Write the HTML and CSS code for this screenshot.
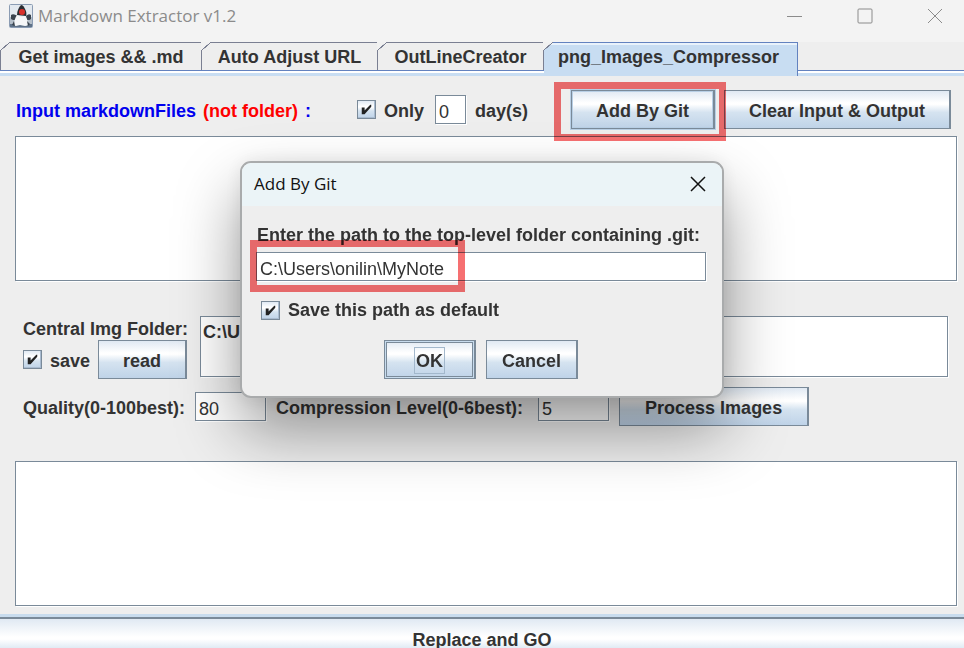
FILE: index.html
```html
<!DOCTYPE html>
<html lang="en">
<head>
<meta charset="utf-8">
<title>Markdown Extractor v1.2</title>
<link rel="stylesheet" href="styles.css">
</head>
<body>
<main class="window">
  <header class="titlebar">
    <svg class="app-icon" viewBox="0 0 24 24" aria-hidden="true">
      <rect x=".5" y=".5" width="23" height="23" rx="1" fill="#e3e9ef" stroke="#8b9cb3"/>
      <path d="M1 13h22v7H1z" fill="#b4bec8"/>
      <path d="M1 20h22v3H1z" fill="#5f7288"/>
      <path d="M2 11c2-2 5 0 7 1l-2 4c-2 0-4 0-5-1zM22 11c-2-2-4 0-5 1l1 4c2 0 3 0 4-1z" fill="#3b444e"/>
      <path d="M12 1c-2 2-4 6-4 10l9 1c1-3 0-5-1-7s-2-4-4-4z" fill="#2a2d31"/>
      <path d="M8 11c-2 3-3 6-3 10 2 2 4 0 6 0s5 2 8 0c0-4-1-7-3-9-2 1-5 1-8-1z" fill="#f6f7f8"/>
      <path d="M5 17l-2 4 3 1zM18 17l3 3-2 2z" fill="#39434d"/>
      <circle cx="13" cy="8" r="3" fill="#d9302a"/>
    </svg>
    <h1 class="title">Markdown Extractor v1.2</h1>
    <div class="window-controls">
      <button type="button" aria-label="Minimize"><svg viewBox="0 0 16 16"><path d="M0 8.5h15"/></svg></button>
      <button type="button" aria-label="Maximize"><svg viewBox="0 0 16 16"><rect x="1" y="1" width="14" height="14" rx="1"/></svg></button>
      <button type="button" aria-label="Close"><svg viewBox="0 0 16 16"><path d="M1 1l14 14M15 1L1 15"/></svg></button>
    </div>
  </header>

  <nav class="tabs" role="tablist">
    <button type="button" class="tab tab-get" role="tab">Get images &amp;&amp; .md</button>
    <button type="button" class="tab tab-adjust" role="tab">Auto Adjust URL</button>
    <button type="button" class="tab tab-outline" role="tab">OutLineCreator</button>
    <button type="button" class="tab tab-active" role="tab" aria-selected="true">png_Images_Compressor</button>
  </nav>

  <section class="panel">
    <div class="input-row">
      <label class="input-label" for="files"><span>Input markdownFiles</span> <span class="warn">(not folder)</span> <span>:</span></label>
      <div class="days">
        <span class="check">
          <input type="checkbox" id="only" checked>
          <svg viewBox="0 0 20 20" aria-hidden="true"><path d="M5 8h3v3l6-6h1v2l-7 8H5z"/></svg>
        </span>
        <label for="only">Only</label>
        <input class="field field-days" id="days" type="text" value="0">
        <label for="days">day(s)</label>
      </div>
      <div class="marked marked-button">
        <button type="button" class="btn btn-focus btn-git">Add By Git</button>
      </div>
      <button type="button" class="btn btn-clear">Clear Input &amp; Output</button>
    </div>

    <textarea class="area" id="files"></textarea>

    <div class="folder-row">
      <div class="folder-side">
        <label for="folder">Central Img Folder:</label>
        <div class="folder-actions">
          <span class="check">
            <input type="checkbox" id="save" checked>
            <svg viewBox="0 0 20 20" aria-hidden="true"><path d="M5 8h3v3l6-6h1v2l-7 8H5z"/></svg>
          </span>
          <label for="save">save</label>
          <button type="button" class="btn btn-read">read</button>
        </div>
      </div>
      <textarea class="area area-folder" id="folder">C:\U</textarea>
    </div>

    <div class="quality-row">
      <label for="quality">Quality(0-100best):</label>
      <input class="field field-number" id="quality" type="text" value="80">
      <label class="level-label" for="level">Compression Level(0-6best):</label>
      <input class="field field-number" id="level" type="text" value="5">
      <button type="button" class="btn btn-process">Process Images</button>
    </div>

    <textarea class="area" aria-label="Output"></textarea>
  </section>

  <button type="button" class="go">Replace and GO</button>

  <div class="dialog" role="dialog" aria-labelledby="dialog-title">
    <header class="dialog-bar">
      <h2 class="dialog-title" id="dialog-title">Add By Git</h2>
      <button type="button" class="dialog-close" aria-label="Close"><svg viewBox="0 0 16 16"><path d="M1 1l14 14M15 1L1 15"/></svg></button>
    </header>
    <div class="dialog-body">
      <label for="path">Enter the path to the top-level folder containing .git:</label>
      <div class="marked marked-path">
        <input class="field field-path" id="path" type="text" value="C:\Users\onilin\MyNote">
      </div>
      <div class="default-row">
        <span class="check">
          <input type="checkbox" id="default" checked>
          <svg viewBox="0 0 20 20" aria-hidden="true"><path d="M5 8h3v3l6-6h1v2l-7 8H5z"/></svg>
        </span>
        <label for="default">Save this path as default</label>
      </div>
      <div class="dialog-actions">
        <button type="button" class="btn btn-default"><span class="focus-text">OK</span></button>
        <button type="button" class="btn btn-cancel">Cancel</button>
      </div>
    </div>
  </div>
</main>
</body>
</html>
```
FILE: styles.css
```css
:root {
  --line: #7a8a99;
  --steel: linear-gradient(#e0e9f3 0%, #ffffff 32%, #ffffff 36%, #d5e3f0 58%, #bfd3e8 100%);
}

*,
*::before,
*::after {
  box-sizing: border-box;
}

body {
  margin: 0;
  background: #eeeeee;
  color: #333333;
  font: bold 18px/22px "Liberation Sans", Arial, sans-serif;
}

button,
input,
textarea {
  margin: 0;
  color: inherit;
  font: inherit;
}

label {
  white-space: nowrap;
}

.window {
  position: relative;
  display: flex;
  flex-direction: column;
  height: 100vh;
  overflow: hidden;
}

/* Title bar */

.titlebar {
  display: flex;
  flex: none;
  align-items: center;
  height: 42px;
  padding: 0 21px 10px 9px;
  background: #f3f3f3;
}

.app-icon {
  width: 24px;
  height: 24px;
}

.title {
  margin: 0 auto 0 5px;
  color: #8b8b8b;
  font: 17px/24px "Open Sans", "Segoe UI", sans-serif;
}

.window-controls {
  display: flex;
  gap: 54px;
}

.window-controls button,
.dialog-close {
  display: flex;
  padding: 0;
  border: 0;
  background: none;
}

.window-controls svg,
.dialog-close svg {
  width: 16px;
  height: 16px;
  fill: none;
  stroke: #8b8b8b;
}

/* Tabs */

.tabs {
  display: flex;
  flex: none;
  height: 34px;
  background: linear-gradient(#6382bf, #6382bf) 0 28px / 100% 1px no-repeat,
    linear-gradient(#ffffff, #ffffff) 0 29px / 100% 2px no-repeat,
    linear-gradient(#c8ddf2, #c8ddf2) 0 31px / 100% 3px no-repeat,
    #eeeeee;
}

.tab {
  position: relative;
  height: 28px;
  padding: 0;
  border: solid #7a7f92;
  border-width: 1px 1px 0 0;
  background: #eeeeee;
  white-space: nowrap;
}

.tab-get {
  width: 202px;
  border-left-width: 1px;
}

.tab-adjust {
  width: 176px;
}

.tab-outline {
  width: 166px;
}

.tab::before {
  position: absolute;
  top: -1px;
  left: -1px;
  width: 10px;
  height: 9px;
  background: linear-gradient(to bottom right, #f1f1f1 46%, #7a7f92 47%, #7a7f92 53%, transparent 54%);
  content: "";
}

.tab-active {
  width: 254px;
  height: 34px;
  padding: 0 4px 5px 0;
  border-color: #6382bf;
  background: #c8ddf2;
  box-shadow: inset 0 2px #e9f2fb;
}

/* Shared controls */

.check {
  display: grid;
  width: 19px;
  height: 19px;
}

.check > * {
  grid-area: 1 / 1;
  width: 19px;
  height: 19px;
  margin: 0;
}

.check input {
  border: 1px solid var(--line);
  background: var(--steel);
  box-shadow: inset -1px -1px #a9bbd0;
  appearance: none;
}

.check svg {
  pointer-events: none;
  fill: #222222;
}

.btn {
  height: 39px;
  padding: 2px 0 0;
  border: 1px solid var(--line);
  border-right-width: 2px;
  border-radius: 0;
  background: var(--steel);
  white-space: nowrap;
}

.field {
  height: 29px;
  padding: 5px 3px 0;
  border: 1px solid var(--line);
  border-radius: 0;
  background: #ffffff;
  box-shadow: 1px 1px #ffffff;
  font-weight: normal;
}

.area {
  display: block;
  width: 100%;
  height: 145px;
  padding: 4px 2px;
  border: 1px solid var(--line);
  border-radius: 0;
  background: #ffffff;
  box-shadow: 1px 1px #ffffff;
  resize: none;
}

/* Annotation frames drawn over the controls they point at */

.marked {
  position: relative;
}

.marked::after {
  position: absolute;
  border: 7px solid #f67071;
  mix-blend-mode: multiply;
  pointer-events: none;
  content: "";
}

.marked-button::after {
  inset: -8px -11px -12px -17px;
  z-index: 1;
}

.marked-path::after {
  top: -12px;
  left: -6px;
  width: 215px;
  height: 52px;
}

/* Compressor panel */

.panel {
  flex: none;
  padding: 14px 7px 7px 15px;
}

.input-row {
  display: flex;
  align-items: center;
  margin-bottom: 7px;
  padding-right: 6px;
}

.input-label {
  display: flex;
  gap: 7px;
  padding: 2px 0 0 1px;
  color: #0000ee;
}

.warn {
  color: #ff0000;
}

.days {
  display: flex;
  align-items: center;
  gap: 8px;
  margin-left: auto;
}

.days label {
  padding-top: 2px;
}

.field-days {
  width: 31px;
  margin: 0 1px 0 3px;
}

.marked-button {
  margin: 0 9px 0 43px;
}

.btn-git {
  width: 144px;
}

.btn-focus {
  display: block;
  box-shadow: 0 0 0 1px #b8cfe5, inset 0 0 0 1px #b8cfe5;
}

.btn-clear {
  width: 227px;
}

.folder-row {
  display: flex;
  gap: 9px;
  margin-top: 35px;
  padding: 0 9px 0 8px;
}

.folder-side {
  display: flex;
  flex: none;
  flex-direction: column;
  width: 168px;
  padding-top: 2px;
}

.folder-actions {
  display: flex;
  align-items: center;
  gap: 8px;
}

.folder-actions label {
  padding-top: 2px;
}

.btn-read {
  width: 89px;
}

.area-folder {
  flex: 1;
  height: 61px;
}

.quality-row {
  display: flex;
  align-items: center;
  gap: 10px;
  margin: 8px 0 35px;
  padding-left: 8px;
}

.quality-row label {
  padding-top: 2px;
}

.field-number {
  width: 71px;
}

.level-label {
  margin-right: 5px;
}

.btn-process {
  width: 190px;
}

.go {
  flex: none;
  width: 100%;
  height: 60px;
  margin-top: 4px;
  padding: 0 0 14px;
  border: solid var(--line);
  border-width: 2px 0;
  background: var(--steel);
  box-shadow: 0 -3px #c8dcee;
}

/* Dialog */

.dialog {
  position: absolute;
  top: 161px;
  left: 50%;
  width: 484px;
  max-width: 100%;
  transform: translateX(-50%);
  overflow: hidden;
  border: 2px solid #a9abac;
  border-radius: 11px;
  background: #eeeeee;
  box-shadow: 0 32px 64px rgba(0, 0, 0, 0.4), 0 0 20px rgba(0, 0, 0, 0.08);
}

.dialog-bar {
  display: flex;
  align-items: center;
  justify-content: space-between;
  height: 43px;
  padding: 0 16px 2px 12px;
  background: #ebf4f7;
}

.dialog-title {
  margin: 0;
  color: #111111;
  font: 17px/24px "Open Sans", "Segoe UI", sans-serif;
}

.dialog-close svg {
  stroke: #111111;
  stroke-width: 1.5;
}

.dialog-body {
  padding: 18px 16px 17px 14px;
}

.dialog-body > label {
  display: block;
  margin-bottom: 6px;
  padding-left: 1px;
}

.field-path {
  display: block;
  width: 100%;
}

.default-row {
  display: flex;
  align-items: center;
  gap: 8px;
  margin: 18px 0 19px 5px;
}

.dialog-actions {
  display: flex;
  justify-content: center;
  gap: 10px;
}

.btn-default,
.btn-cancel {
  width: 92px;
}

.btn-default {
  box-shadow: inset 0 0 0 1px #c8dcee, inset 0 0 0 2px var(--line);
}

.focus-text {
  display: inline-block;
  padding: 2px 1px 1px;
  border: 1px solid #a3b8cc;
}
```
